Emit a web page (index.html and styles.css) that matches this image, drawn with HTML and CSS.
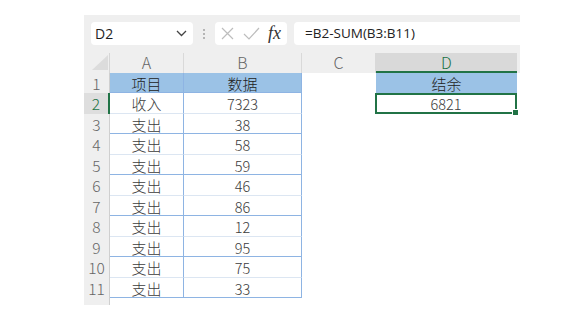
FILE: index.html
```html
<!DOCTYPE html>
<html>
    <head>
        <meta http-equiv="content-type" content="text/html; charset=UTF-8">
        <title>结余</title>
        <link rel="stylesheet" href="styles.css">
    </head>
    <body>
        <div class="sheet">
            <!-- formula bar -->
            <div class="toolbar">
                <div class="namebox">
                    <span>D2</span>
                    <svg width="11" height="7" viewBox="0 0 11 7"><path d="M1 1 L5.5 5.5 L10 1" fill="none" stroke="#444" stroke-width="1.3"/></svg>
                </div>
                <div class="dots"><i></i><i></i><i></i></div>
                <div class="fxbox">
                    <svg class="ic cancel" width="13" height="13" viewBox="0 0 13 13"><path d="M1 1 L12 12 M12 1 L1 12" stroke="#bdbdbd" stroke-width="1.2" fill="none"/></svg>
                    <svg class="ic" width="17" height="13" viewBox="0 0 17 13"><path d="M1 7 L6 12 L16 1" stroke="#bdbdbd" stroke-width="1.2" fill="none"/></svg>
                    <span class="fx">fx</span>
                </div>
                <div class="formula">=B2-SUM(B3:B11)</div>
            </div>

            <div class="grid">
                <div class="corner"><svg width="26" height="19" viewBox="0 0 26 19"><path d="M8 17 L24 17 L24 2 Z" fill="#dcdcdc"/></svg></div>
                <div class="colhead sep">A</div>
                <div class="colhead sep">B</div>
                <div class="colhead sep">C</div>
                <div class="colhead active">D</div>
                <div class="colhead"></div>

                <div class="rowhead">1</div>
                <div class="cell head blue-b">项目</div>
                <div class="cell head blue-b">数据</div>
                <div class="cell"></div>
                <div class="cell head">结余</div>
                <div class="cell"></div>

                <div class="rowhead active">2</div>
                <div class="cell data soft">收入</div>
                <div class="cell data soft num">7323</div>
                <div class="cell"></div>
                <div class="cell result num">6821<span class="handle"></span></div>
                <div class="cell"></div>

                <div class="rowhead">3</div>
                <div class="cell data">支出</div>
                <div class="cell data num">38</div>
                <div class="cell"></div><div class="cell"></div><div class="cell"></div>

                <div class="rowhead">4</div>
                <div class="cell data soft">支出</div>
                <div class="cell data soft num">58</div>
                <div class="cell"></div><div class="cell"></div><div class="cell"></div>

                <div class="rowhead">5</div>
                <div class="cell data">支出</div>
                <div class="cell data num">59</div>
                <div class="cell"></div><div class="cell"></div><div class="cell"></div>

                <div class="rowhead">6</div>
                <div class="cell data soft">支出</div>
                <div class="cell data soft num">46</div>
                <div class="cell"></div><div class="cell"></div><div class="cell"></div>

                <div class="rowhead">7</div>
                <div class="cell data">支出</div>
                <div class="cell data num">86</div>
                <div class="cell"></div><div class="cell"></div><div class="cell"></div>

                <div class="rowhead">8</div>
                <div class="cell data soft">支出</div>
                <div class="cell data soft num">12</div>
                <div class="cell"></div><div class="cell"></div><div class="cell"></div>

                <div class="rowhead">9</div>
                <div class="cell data">支出</div>
                <div class="cell data num">95</div>
                <div class="cell"></div><div class="cell"></div><div class="cell"></div>

                <div class="rowhead">10</div>
                <div class="cell data soft">支出</div>
                <div class="cell data soft num">75</div>
                <div class="cell"></div><div class="cell"></div><div class="cell"></div>

                <div class="rowhead">11</div>
                <div class="cell data">支出</div>
                <div class="cell data num">33</div>
                <div class="cell"></div><div class="cell"></div><div class="cell"></div>

                <div class="rowhead cut"></div>
            </div>
        </div>
        <p class="note">如下图所示，在D2单元格中输入公式计算结余：</p>
    </body>
</html>
```
FILE: styles.css
```css
html, body {margin: 0; padding: 0; background: #fff; overflow: hidden;}
body {font-family: "Noto Sans CJK SC", sans-serif; color: #333;}

.sheet {margin: 15px 0 0 84px; width: 436px;}

/* formula bar */
.toolbar {display: flex; align-items: flex-start; height: 38px; box-sizing: border-box; padding: 7px 0 0 7px; background: #efefef;}
.namebox {display: flex; align-items: center; justify-content: space-between; width: 102px; height: 23px; box-sizing: border-box; padding: 0 6px 0 4px; background: #fff; border-radius: 4px; font-family: "Open Sans", sans-serif; font-size: 14px; color: #1e1e1e;}
.dots {display: flex; flex-direction: column; align-items: center; justify-content: center; gap: 2px; width: 22px; height: 23px;}
.dots i {display: block; width: 2px; height: 2px; background: #b5b5b5;}
.fxbox {display: flex; align-items: center; width: 72px; height: 23px; box-sizing: border-box; padding-left: 6px; background: #fff; border-radius: 4px;}
.fxbox .ic {margin-right: 3px;}
.fxbox .cancel {margin-right: 9px;}
.fx {margin-left: 5px; font-family: "Liberation Serif", serif; font-style: italic; font-size: 18px; color: #333; line-height: 23px;}
.formula {flex: 1; height: 23px; margin-left: 7px; padding-left: 11px; background: #fff; border-radius: 4px 0 0 4px; font-family: "Open Sans", sans-serif; font-size: 13.5px; line-height: 23px; color: #222;}

/* cells */
.grid {display: grid; grid-template-columns: 26px 74px 118px 74px 141px 3px; grid-template-rows: 19.5px repeat(11, 20.5px) 7px;}
.corner {background: #efefef; border-right: 1px solid #d6d6d6; box-sizing: border-box;}
.corner svg {display: block;}
.colhead {background: #efefef; text-align: center; font-size: 16px; font-weight: 300; line-height: 19px; color: #666; box-sizing: border-box;}
.colhead.sep {border-right: 1px solid #d9d9d9;}
.colhead.active {background: #d9d9d9; color: #217346; border-bottom: 2px solid #217346;}
.rowhead {background: #efefef; border-right: 1px solid #cfcfcf; box-sizing: border-box; text-align: center; font-size: 15.5px; font-weight: 300; line-height: 21px; color: #666; white-space: nowrap;}
.rowhead.active {background: #dedede; color: #217346; border-right: 2px solid #217346;}

.cell {box-sizing: border-box; padding-top: 1px; text-align: center; font-size: 15px; font-weight: 300; line-height: 20px; color: #3c3c3c; white-space: nowrap;}
.num {font-size: 14.5px;}
.head {background: #9bc2e6; color: #222;}
.blue-b {border-right: 1px solid #8eb4e3; border-bottom: 1px solid #8eb4e3;}
.data {border-right: 1px solid #8eb4e3; border-bottom: 1px solid #8eb4e3;}
.data.soft {border-bottom-color: #dce6f2;}
.result {position: relative; padding-top: 0; border: 2px solid #217346; margin-left: -1px; line-height: 17px;}
.handle {position: absolute; right: -4px; bottom: -4px; width: 5px; height: 5px; background: #217346; border: 1px solid #fff;}

.note {margin: 27px 0 0 0; font-size: 16px; line-height: 20px; color: #333; white-space: nowrap;}
```
